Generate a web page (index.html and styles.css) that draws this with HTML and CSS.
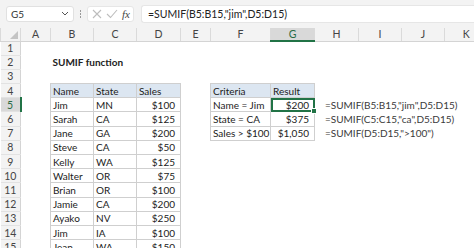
FILE: index.html
```html
<!DOCTYPE html>
<html lang="en">
<head>
    <meta charset="UTF-8">
    <meta name="viewport" content="width=device-width, initial-scale=1.0">
    <title>SUMIF function</title>
    <link rel="stylesheet" href="styles.css">
</head>
<body>
    <div class="app">
        <div class="formula-bar">
            <div class="name-box">
                <span>G5</span>
                <svg class="chevron" width="8" height="5" viewBox="0 0 8 5"><path d="M1 1 L4 4 L7 1" fill="none" stroke="#555" stroke-width="1"/></svg>
            </div>
            <div class="grip">
                <span></span><span></span><span></span>
            </div>
            <div class="fx-buttons">
                <svg width="10" height="10" viewBox="0 0 10 10"><path d="M1 1 L9 9 M9 1 L1 9" stroke="#bdbdbd" stroke-width="1.1" fill="none"/></svg>
                <svg width="12" height="10" viewBox="0 0 12 10"><path d="M1 5 L4.5 8.5 L11 1" stroke="#bdbdbd" stroke-width="1.1" fill="none"/></svg>
                <span class="fx">fx</span>
            </div>
            <div class="formula-input">=SUMIF(B5:B15,"jim",D5:D15)</div>
        </div>

        <div class="sheet-wrap">
            <table class="sheet">
                <colgroup>
                    <col class="c-row"><col class="c-a"><col class="c-b"><col class="c-c"><col class="c-d"><col class="c-e"><col class="c-f"><col class="c-g"><col class="c-h"><col class="c-i"><col class="c-j"><col class="c-k">
                </colgroup>
                <thead>
                    <tr class="col-heads">
                        <th class="corner"><span class="tri"></span></th>
                        <th>A</th><th>B</th><th>C</th><th>D</th><th>E</th><th>F</th><th class="sel">G</th><th>H</th><th>I</th><th>J</th><th>K</th>
                    </tr>
                </thead>
                <tbody>
                    <tr><th>1</th><td></td><td></td><td></td><td></td><td></td><td></td><td></td><td></td><td></td><td></td><td></td></tr>
                    <tr><th>2</th><td></td><td class="title">SUMIF function</td><td></td><td></td><td></td><td></td><td></td><td></td><td></td><td></td><td></td></tr>
                    <tr><th>3</th><td></td><td></td><td></td><td></td><td></td><td></td><td></td><td></td><td></td><td></td><td></td></tr>
                    <tr><th>4</th><td></td><td class="bd hd">Name</td><td class="bd hd">State</td><td class="bd hd">Sales</td><td></td><td class="bd hd">Criteria</td><td class="bd hd">Result</td><td></td><td></td><td></td><td></td></tr>
                    <tr><th class="sel">5</th><td></td><td class="bd">Jim</td><td class="bd">MN</td><td class="bd num">$100</td><td></td><td class="bd">Name = Jim</td><td class="bd num active">$200<span class="handle"></span></td><td class="formula">=SUMIF(B5:B15,"jim",D5:D15)</td><td></td><td></td><td></td></tr>
                    <tr><th>6</th><td></td><td class="bd">Sarah</td><td class="bd">CA</td><td class="bd num">$125</td><td></td><td class="bd">State = CA</td><td class="bd num">$375</td><td class="formula">=SUMIF(C5:C15,"ca",D5:D15)</td><td></td><td></td><td></td></tr>
                    <tr><th>7</th><td></td><td class="bd">Jane</td><td class="bd">GA</td><td class="bd num">$200</td><td></td><td class="bd">Sales &gt; $100</td><td class="bd num">$1,050</td><td class="formula">=SUMIF(D5:D15,"&gt;100")</td><td></td><td></td><td></td></tr>
                    <tr><th>8</th><td></td><td class="bd">Steve</td><td class="bd">CA</td><td class="bd num">$50</td><td></td><td></td><td></td><td></td><td></td><td></td><td></td></tr>
                    <tr><th>9</th><td></td><td class="bd">Kelly</td><td class="bd">WA</td><td class="bd num">$125</td><td></td><td></td><td></td><td></td><td></td><td></td><td></td></tr>
                    <tr><th>10</th><td></td><td class="bd">Walter</td><td class="bd">OR</td><td class="bd num">$75</td><td></td><td></td><td></td><td></td><td></td><td></td><td></td></tr>
                    <tr><th>11</th><td></td><td class="bd">Brian</td><td class="bd">OR</td><td class="bd num">$100</td><td></td><td></td><td></td><td></td><td></td><td></td><td></td></tr>
                    <tr><th>12</th><td></td><td class="bd">Jamie</td><td class="bd">CA</td><td class="bd num">$200</td><td></td><td></td><td></td><td></td><td></td><td></td><td></td></tr>
                    <tr><th>13</th><td></td><td class="bd">Ayako</td><td class="bd">NV</td><td class="bd num">$250</td><td></td><td></td><td></td><td></td><td></td><td></td><td></td></tr>
                    <tr><th>14</th><td></td><td class="bd">Jim</td><td class="bd">IA</td><td class="bd num">$100</td><td></td><td></td><td></td><td></td><td></td><td></td><td></td></tr>
                    <tr><th>15</th><td></td><td class="bd">Jean</td><td class="bd">WA</td><td class="bd num">$150</td><td></td><td></td><td></td><td></td><td></td><td></td><td></td></tr>
                </tbody>
            </table>
        </div>
    </div>
</body>
</html>
```

FILE: styles.css
```css
body {
    margin: 0;
    font-family: Lato, "Liberation Sans", sans-serif;
    background-color: #fff;
    color: #222;
}

.app {
    width: 474px;
    height: 248px;
    overflow: hidden;
}

/* formula bar */
.formula-bar {
    display: flex;
    align-items: center;
    height: 27px;
    padding: 0 0 0 6px;
    background-color: #f3f3f3;
    box-sizing: border-box;
}

.name-box {
    display: flex;
    align-items: center;
    justify-content: space-between;
    width: 68px;
    height: 16px;
    padding: 0 4px 0 4px;
    box-sizing: border-box;
    background-color: #fff;
    border: 1px solid #e1e1e1;
    border-radius: 3px;
    font-size: 10px;
    color: #333;
}

.grip {
    display: flex;
    flex-direction: column;
    gap: 1px;
    margin: 0 6px 0 6px;
}

.grip span {
    width: 1px;
    height: 2px;
    background-color: #9a9a9a;
}

.fx-buttons {
    display: flex;
    align-items: center;
    justify-content: space-between;
    width: 47px;
    height: 16px;
    padding: 0 3px 0 4px;
    box-sizing: border-box;
    background-color: #fff;
    border: 1px solid #e6e6e6;
    border-radius: 3px;
}

.fx {
    font-family: "Liberation Serif", serif;
    font-style: italic;
    font-size: 11px;
    color: #444;
}

.formula-input {
    flex: 1;
    height: 16px;
    margin-left: 7px;
    padding-left: 6px;
    line-height: 16px;
    background-color: #fff;
    border: 1px solid #e6e6e6;
    border-right: none;
    border-radius: 3px 0 0 3px;
    font-size: 10.5px;
    color: #222;
    white-space: nowrap;
}

/* grid */
.sheet-wrap {
    padding-top: 1px;
    background-color: #f3f3f3;
}

.sheet {
    table-layout: fixed;
    width: 487px;
    border-collapse: collapse;
    font-size: 10px;
    background-color: #fff;
}

.c-row { width: 20px; }
.c-a, .c-e { width: 30px; }
.c-b, .c-c { width: 43px; }
.c-d, .c-g, .c-h { width: 44px; }
.c-f { width: 60px; }
.c-i, .c-j, .c-k { width: 43px; }

.sheet td,
.sheet th {
    height: 13.2px;
    padding: 0 2px;
    white-space: nowrap;
    overflow: visible;
    line-height: 12px;
}

.sheet .col-heads th {
    height: 12px;
    font-size: 10.5px;
    font-weight: normal;
    color: #444;
    background-color: #f3f3f3;
    border-left: 1px solid #dadada;
    border-bottom: 1px solid #d4d4d4;
    text-align: center;
}

.sheet .col-heads th.sel {
    background-color: #d9d9d9;
    color: #2b6b45;
    border-bottom: 2px solid #217346;
}

.corner {
    position: relative;
}

.tri {
    position: absolute;
    right: 2px;
    bottom: 2px;
    width: 0;
    height: 0;
    border-left: 8px solid transparent;
    border-bottom: 8px solid #c4c4c4;
}

.sheet tbody th {
    font-size: 10.5px;
    font-weight: normal;
    color: #444;
    background-color: #f3f3f3;
    border-right: 1px solid #d4d4d4;
    border-bottom: 1px solid #e2e2e2;
    text-align: center;
}

.sheet tbody th.sel {
    background-color: #d9d9d9;
    color: #2b6b45;
    border-right: 2px solid #217346;
}

.title {
    font-weight: bold;
}

.bd {
    border: 1px solid #cfcfcf;
}

.hd {
    background-color: #dce6f1;
}

.sheet .num {
    text-align: right;
    padding-right: 5px;
}

.active {
    position: relative;
    outline: 2px solid #217346;
    outline-offset: -2px;
}

.handle {
    position: absolute;
    right: -3px;
    bottom: -3px;
    width: 4px;
    height: 4px;
    background-color: #217346;
    border: 1px solid #fff;
}

.sheet .formula {
    padding-left: 10px;
    color: #3a3a3a;
}
```
